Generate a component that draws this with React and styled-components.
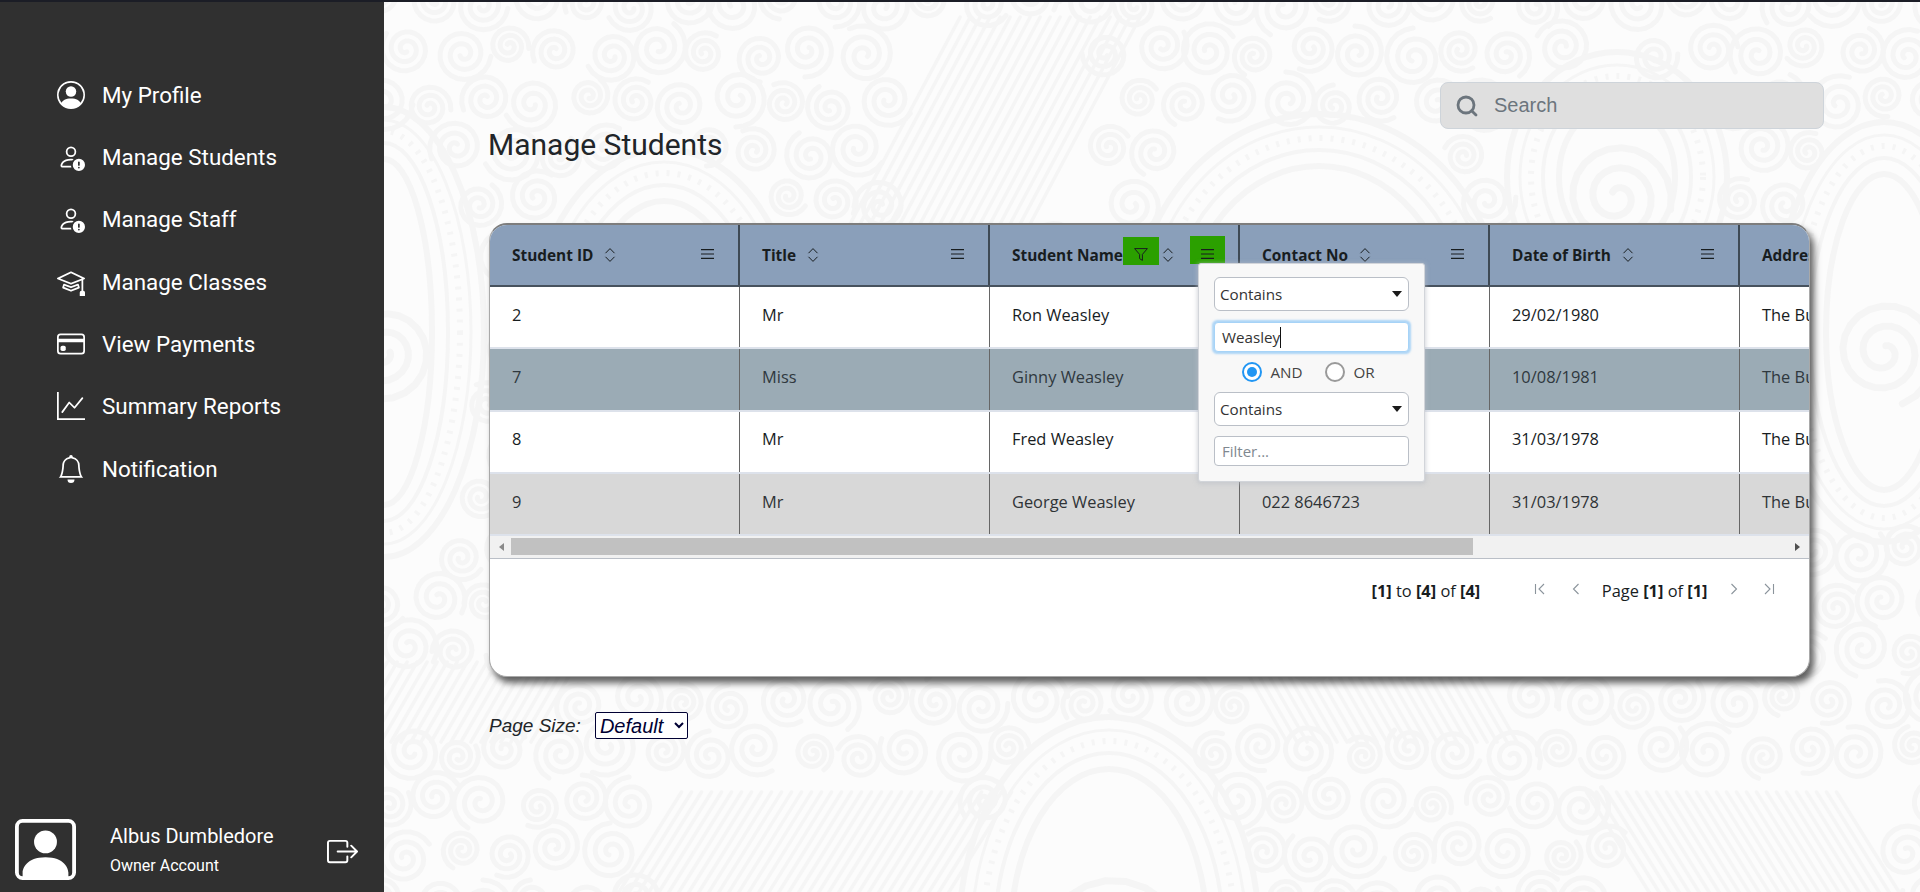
import React from 'react'
import styled, { createGlobalStyle } from 'styled-components'
import {
  BsPersonCircle, BsPersonExclamation, BsMortarboard, BsCreditCard,
  BsGraphUp, BsBell, BsBoxArrowRight, BsPersonSquare,
} from 'react-icons/bs'
import { Search } from 'lucide-react'

const GlobalStyle = createGlobalStyle`
  html, body { margin: 0; padding: 0; height: 100%; overflow: hidden; background: #fcfcfc; }
  * { box-sizing: border-box; }
`

const NAV = [
  ['My Profile', BsPersonCircle],
  ['Manage Students', BsPersonExclamation],
  ['Manage Staff', BsPersonExclamation],
  ['Manage Classes', BsMortarboard],
  ['View Payments', BsCreditCard],
  ['Summary Reports', BsGraphUp],
  ['Notification', BsBell],
]

const COLUMNS = ['Student ID', 'Title', 'Student Name', 'Contact No', 'Date of Birth', 'Address']

// contact numbers of the first rows sit under the open filter popup
const ROWS = [
  { bg: '#ffffff', color: '#181d1f', cells: ['2', 'Mr', 'Ron Weasley', '', '29/02/1980', 'The Burrow'] },
  { bg: '#9babb5', color: '#2f383e', cells: ['7', 'Miss', 'Ginny Weasley', '', '10/08/1981', 'The Burrow'] },
  { bg: '#ffffff', color: '#181d1f', cells: ['8', 'Mr', 'Fred Weasley', '', '31/03/1978', 'The Burrow'] },
  { bg: '#d8d8d8', color: '#2f3336', cells: ['9', 'Mr', 'George Weasley', '022 8646723', '31/03/1978', 'The Burrow'] },
]

// background ornament, built from spirals, rings and hatched leaves
const spiral = (cx, cy, r, turns, start, dir) => {
  let d = ''
  const steps = Math.round(turns * 22)
  for (let i = 0; i <= steps; i++) {
    const t = i / steps
    const a = start + dir * t * turns * Math.PI * 2
    const rad = r * (0.12 + 0.88 * t)
    d += `${i ? 'L' : 'M'}${(cx + Math.cos(a) * rad).toFixed(1)} ${(cy + Math.sin(a) * rad).toFixed(1)}`
  }
  return d
}

const PAISLEYS = [
  [0, 330, 100, 225],
  [280, 345, 135, 198],
  [935, 320, 185, 208],
  [725, 930, 150, 215],
  [1233, 175, 110, 125],
  [1500, 330, 110, 210],
]

const LEAVES = [
  [610, 130, 95, 115, 62],
  [430, 850, 170, 60, 58],
  [1370, 850, 130, 60, 122],
  [60, 700, 120, 40, 60],
  [1000, 700, 120, 40, 120],
]

const inPaisley = (x, y) =>
  PAISLEYS.some(([cx, cy, rx, ry]) => ((x - cx) / rx) ** 2 + ((y - cy) / ry) ** 2 < 1.02)

const SWIRLS = []
for (let gy = 0; gy < 19; gy++) {
  for (let gx = 0; gx < 32; gx++) {
    const x = gx * 50 + (gy % 2 ? 25 : 0) + ((gx * 7 + gy * 13) % 11) - 5
    const y = gy * 50 + ((gx * 5 + gy * 3) % 13) - 6
    if (inPaisley(x, y)) continue
    if (LEAVES.some(([lx, ly, w, h]) => Math.abs(x - lx) < w && Math.abs(y - ly) < h)) continue
    const r = 20 + ((gx * 3 + gy * 5) % 11)
    SWIRLS.push(spiral(x, y, r, 2.4, (gx + gy) * 1.3, (gx + gy) % 2 ? 1 : -1))
  }
}

function Ornament() {
  return (
    <OrnamentSvg width="1536" height="892" viewBox="0 0 1536 892" fill="none" aria-hidden="true">
      <g stroke="#f5f5f5" strokeWidth="5" strokeLinecap="round">
        {SWIRLS.map((d, i) => <path key={i} d={d} />)}
        {PAISLEYS.map(([cx, cy, rx, ry], i) => (
          <g key={i}>
            <ellipse cx={cx} cy={cy} rx={rx} ry={ry} strokeWidth="6" />
            <ellipse cx={cx} cy={cy} rx={rx - 13} ry={ry - 13} strokeWidth="3" />
            <ellipse cx={cx} cy={cy} rx={rx - 24} ry={ry - 24} strokeDasharray="3 8" strokeWidth="6" strokeLinecap="butt" />
            <ellipse cx={cx} cy={cy} rx={rx - 36} ry={ry - 36} strokeWidth="4" />
            <ellipse cx={cx} cy={cy} rx={rx - 52} ry={ry - 52} strokeWidth="6" />
            <path d={spiral(cx, cy + 20, Math.min(rx, ry) * 0.5, 2.4, i, 1)} strokeWidth="7" />
          </g>
        ))}
        {LEAVES.map(([x, y, w, h, angle], i) => (
          <g key={i} strokeWidth="3.5">
            {Array.from({ length: Math.floor((w * 2) / 10) }, (_, k) => {
              const px = x - w + k * 10
              const dx = h / Math.tan((angle * Math.PI) / 180)
              return <line key={k} x1={px - dx} y1={y + h} x2={px + dx} y2={y - h} />
            })}
          </g>
        ))}
      </g>
    </OrnamentSvg>
  )
}

const SortIcon = () => (
  <SortSvg viewBox="0 0 12 16" fill="none" stroke="#181d1f" strokeWidth="1">
    <path d="M1.5 6.2 6 1.6l4.5 4.6M1.5 9.8 6 14.4l4.5-4.6" />
  </SortSvg>
)

const MenuIcon = () => (
  <svg width="13" height="10" viewBox="0 0 13 10" stroke="#181d1f" strokeWidth="1.1">
    <path d="M0 .6h13M0 5h13M0 9.4h13" />
  </svg>
)

const FunnelIcon = () => (
  <svg width="14" height="13" viewBox="0 0 14 13" fill="none" stroke="#181d1f" strokeWidth="1">
    <path d="M.6.6h12.8L8.4 6.4v6L5.6 10.6V6.4z" />
  </svg>
)

const PageIcon = ({ d }) => (
  <PagerSvg viewBox="0 0 12 14" fill="none" stroke="#8b949c" strokeWidth="1.1">
    <path d={d} />
  </PagerSvg>
)

function App() {
  return (
    <Page>
      <GlobalStyle />
      <Sidebar>
        <Nav>
          {NAV.map(([label, Icon]) => (
            <NavItem key={label}>
              <NavIcon><Icon size={28} /></NavIcon>
              {label}
            </NavItem>
          ))}
        </Nav>
        <UserRow>
          <BsPersonSquare size={61} />
          <UserText>
            <UserName>Albus Dumbledore</UserName>
            <UserRole>Owner Account</UserRole>
          </UserText>
          <Logout><BsBoxArrowRight size={31} /></Logout>
        </UserRow>
      </Sidebar>

      <Main>
        <Ornament />
        <TopRow>
          <Title>Manage Students</Title>
          <SearchBox>
            <Search size={24} strokeWidth={2.8} color="#6c757d" />
            <SearchInput placeholder="Search" />
          </SearchBox>
        </TopRow>

        <GridCard>
          <HeaderRow>
            {COLUMNS.map((name) => {
              const active = name === 'Student Name'
              return (
                <HeaderCell key={name}>
                  <HeaderLabel>{name}</HeaderLabel>
                  {active && <FilterButton><FunnelIcon /></FilterButton>}
                  <SortIcon />
                  <MenuButton $active={active}><MenuIcon /></MenuButton>
                </HeaderCell>
              )
            })}
          </HeaderRow>

          {ROWS.map((row) => (
            <BodyRow key={row.cells[0]} $bg={row.bg} $color={row.color}>
              {row.cells.map((text, i) => <BodyCell key={i}>{text}</BodyCell>)}
            </BodyRow>
          ))}

          <ScrollTrack>
            <ScrollArrow $left />
            <ScrollThumb />
            <ScrollArrow />
          </ScrollTrack>

          <Footer>
            <span><b>[1]</b> to <b>[4]</b> of <b>[4]</b></span>
            <Pager>
              <PageIcon d="M1.5 2v10M10 2 5 7l5 5" />
              <PageIcon d="M8.5 2 3.5 7l5 5" />
              <PageText>Page <b>[1]</b> of <b>[1]</b></PageText>
              <PageIcon d="m3.5 2 5 5-5 5" />
              <PageIcon d="m2 2 5 5-5 5M10.5 2v10" />
            </Pager>
          </Footer>

          <FilterPopup>
            <Picker>Contains<PickerArrow /></Picker>
            <FocusField>Weasley<TextCaret /></FocusField>
            <RadioRow>
              <RadioItem><Radio $on />AND</RadioItem>
              <RadioItem><Radio />OR</RadioItem>
            </RadioRow>
            <Picker>Contains<PickerArrow /></Picker>
            <FilterInput placeholder="Filter..." />
          </FilterPopup>
        </GridCard>

        <PageSizeRow>
          <span>Page Size:</span>
          <PageSelect defaultValue="Default">
            <option>Default</option>
          </PageSelect>
        </PageSizeRow>
      </Main>
    </Page>
  )
}

const Page = styled.div`
  display: flex;
  height: 892px;
  border-top: 2px solid #1b1d26;
  font-family: Roboto, sans-serif;
`

const Sidebar = styled.aside`
  width: 384px;
  flex: none;
  background: #303030;
  color: #fff;
  display: flex;
  flex-direction: column;
  justify-content: space-between;
  padding: 61.5px 0 12px 15px;
`

const Nav = styled.nav`
  display: flex;
  flex-direction: column;
  padding-left: 42px;
`

const NavItem = styled.a`
  display: flex;
  align-items: center;
  height: 62.35px;
  gap: 17px;
  font-size: 22.4px;
  font-weight: 400;
  white-space: nowrap;
`

const NavIcon = styled.span`
  display: flex;
  width: 28px;
  justify-content: center;
`

const UserRow = styled.div`
  display: flex;
  align-items: center;
`

const UserText = styled.div`
  display: flex;
  flex-direction: column;
  gap: 8px;
  margin-left: 34px;
  width: 217px;
`

const UserName = styled.span`
  font-size: 20px;
  font-weight: 400;
`

const UserRole = styled.span`
  font-size: 16px;
  font-weight: 400;
`

const Logout = styled.span`
  display: flex;
  margin-top: 4px;
`

const Main = styled.main`
  position: relative;
  flex: 1;
  min-width: 0;
  overflow: hidden;
  background: #fcfcfc;
  padding: 80px 96px 0 105px;
`

const OrnamentSvg = styled.svg`
  position: absolute;
  top: 0;
  left: 0;
`

const TopRow = styled.div`
  position: relative;
  display: flex;
  justify-content: space-between;
  align-items: flex-start;
  height: 141px;
`

const Title = styled.h1`
  margin: 45px 0 0 -1px;
  font-size: 30px;
  line-height: 36px;
  font-weight: 400;
  color: #212529;
`

const SearchBox = styled.label`
  display: flex;
  align-items: center;
  gap: 13px;
  width: 384px;
  height: 47px;
  padding: 0 14px;
  background: #dfdfdf;
  border: 1px solid #ced4da;
  border-radius: 8px;
`

const SearchInput = styled.input`
  flex: 1;
  min-width: 0;
  border: 0;
  outline: 0;
  padding: 0 2px;
  background: transparent;
  font-family: "Liberation Sans", Arial, sans-serif;
  font-size: 20px;
  &::placeholder { color: #6c757d; }
`

const GridCard = styled.section`
  position: relative;
  width: 1321px;
  height: 454px;
  overflow: hidden;
  background: #fff;
  border: 1px solid #a9a9a9;
  border-top: 2px solid #7d7d7d;
  border-radius: 18px;
  box-shadow: 4px 6px 7px rgba(0, 0, 0, 0.62);
  font-family: "Open Sans", sans-serif;
  color: #181d1f;
`

const HeaderRow = styled.div`
  display: flex;
  height: 62px;
  background: #8a9fba;
  border-bottom: 2px solid #47525e;
`

const HeaderCell = styled.div`
  flex: 0 0 250px;
  display: flex;
  align-items: center;
  padding: 0 13px 0 22px;
  border-right: 2px solid #3e4954;
`

const HeaderLabel = styled.span`
  font-size: 15.4px;
  font-weight: 700;
  white-space: nowrap;
  color: #181d1f;
`

const SortSvg = styled.svg`
  width: 12px;
  height: 16px;
  margin-left: 11px;
  flex: none;
`

const FilterButton = styled.span`
  flex: none;
  display: flex;
  align-items: flex-end;
  justify-content: center;
  width: 36px;
  height: 28px;
  padding-bottom: 4px;
  margin: -8px -8px 0 0;
  background: #2ba000;
`

const MenuButton = styled.span`
  flex: none;
  display: flex;
  align-items: flex-end;
  justify-content: center;
  width: 35px;
  height: 28px;
  padding-bottom: 5px;
  margin: -10px 0 0 auto;
  background: ${(p) => (p.$active ? '#2ba000' : 'transparent')};
`

const BodyRow = styled.div`
  display: flex;
  height: 62.3px;
  background: ${(p) => p.$bg};
  color: ${(p) => p.$color};
  border-bottom: 2px solid #dde2eb;
`

const BodyCell = styled.div`
  flex: 0 0 250px;
  padding: 0 22px 6px;
  display: flex;
  align-items: center;
  font-size: 16.4px;
  white-space: nowrap;
  overflow: hidden;
  border-right: 1px solid #666;
  &:last-child { border-right: 0; }
`

const ScrollTrack = styled.div`
  display: flex;
  align-items: center;
  height: 23px;
  padding: 2px 0 3px;
  background: #f1f1f1;
  border-bottom: 1px solid #babfc7;
`

const ScrollThumb = styled.div`
  width: 962px;
  height: 17px;
  background: #c1c1c1;
`

const ScrollArrow = styled.span`
  width: 0;
  height: 0;
  border-top: 4.5px solid transparent;
  border-bottom: 4.5px solid transparent;
  ${(p) => (p.$left
    ? 'border-right: 5px solid #8a8a8a; margin: 0 7px 0 9px;'
    : 'border-left: 5px solid #505050; margin-left: auto; margin-right: 9px; order: 2;')}
`

const Footer = styled.div`
  display: flex;
  align-items: center;
  justify-content: flex-end;
  height: 64px;
  padding: 0 34px 2px 0;
  font-size: 16.4px;
  b { font-weight: 700; }
`

const Pager = styled.div`
  display: flex;
  align-items: center;
  margin-left: 54px;
  gap: 20px;
`

const PagerSvg = styled.svg`
  width: 12px;
  height: 14px;
  margin-top: -3px;
  &:first-child { margin-right: 3.5px; }
  &:last-child { margin-left: 3.5px; }
`

const PageText = styled.span`
  white-space: nowrap;
`

const FilterPopup = styled.div`
  position: absolute;
  top: 38px;
  left: 708px;
  width: 227px;
  height: 219px;
  padding: 13px 15px;
  display: flex;
  flex-direction: column;
  background: #f8f8f8;
  border: 1px solid #d2d5da;
  border-radius: 3px;
  box-shadow: 0 1px 4px 1px rgba(186, 191, 199, 0.6);
  font-size: 15.2px;
  color: #333;
`

const Picker = styled.div`
  display: flex;
  align-items: center;
  justify-content: space-between;
  height: 34px;
  padding: 0 6px 0 5px;
  background: #fff;
  border: 1px solid #babfc7;
  border-radius: 6px;
`

const PickerArrow = styled.span`
  border-left: 5px solid transparent;
  border-right: 5px solid transparent;
  border-top: 6px solid #1a1a1a;
`

const FocusField = styled.div`
  display: flex;
  align-items: center;
  height: 30px;
  margin-top: 11px;
  padding: 0 7px;
  background: #fff;
  border: 1px solid #a6d3f7;
  border-radius: 4px;
  box-shadow: 0 0 2px 1.5px rgba(33, 150, 243, 0.35);
`

const TextCaret = styled.span`
  width: 1px;
  height: 21px;
  background: #111;
`

const RadioRow = styled.div`
  display: flex;
  justify-content: center;
  gap: 23px;
  height: 40px;
  padding-right: 6px;
  align-items: center;
  font-size: 15.2px;
  color: #444;
`

const RadioItem = styled.label`
  display: flex;
  align-items: center;
  gap: 8px;
`

const Radio = styled.span`
  position: relative;
  width: 20px;
  height: 20px;
  border-radius: 50%;
  border: 2px solid ${(p) => (p.$on ? '#2196f3' : '#9a9a9a')};
  background: #fff;
  &::after {
    content: '';
    display: ${(p) => (p.$on ? 'block' : 'none')};
    position: absolute;
    inset: 3px;
    border-radius: 50%;
    background: #2196f3;
  }
`

const FilterInput = styled.input`
  height: 30px;
  margin-top: 10px;
  padding: 0 7px;
  background: #fff;
  border: 1px solid #babfc7;
  border-radius: 4px;
  outline: 0;
  font-family: "Open Sans", sans-serif;
  font-size: 15px;
  &::placeholder { color: #7f8890; }
`

const PageSizeRow = styled.div`
  position: relative;
  display: flex;
  align-items: center;
  gap: 14px;
  margin-top: 35px;
  font-family: "Liberation Sans", Arial, sans-serif;
  font-size: 19px;
  font-style: italic;
  color: #212529;
`

const PageSelect = styled.select`
  width: 93px;
  height: 27px;
  padding: 0;
  background: #fff;
  border: 1px solid #000033;
  border-radius: 2px;
  font: italic 20px "Liberation Sans", Arial, sans-serif;
  color: #000033;
`

export default App
